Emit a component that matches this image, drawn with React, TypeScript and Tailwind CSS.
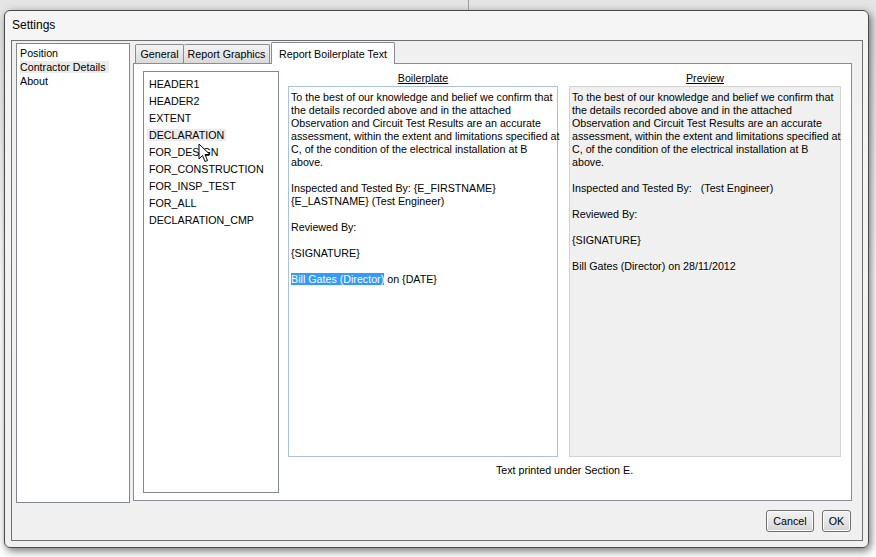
import React from "react";

const font = { fontFamily: '"Liberation Sans", Arial, sans-serif' };

const navItems = ["Position", "Contractor Details", "About"];
const sections = [
  "HEADER1",
  "HEADER2",
  "EXTENT",
  "DECLARATION",
  "FOR_DESIGN",
  "FOR_CONSTRUCTION",
  "FOR_INSP_TEST",
  "FOR_ALL",
  "DECLARATION_CMP",
];

const intro = [
  "To the best of our knowledge and belief we confirm that",
  "the details recorded above and in the attached",
  "Observation and Circuit Test Results are an accurate",
  "assessment, within the extent and limitations specified at",
  "C, of the condition of the electrical installation at B",
  "above.",
];

function Cursor() {
  return (
    <svg width="13" height="20" viewBox="0 0 13 20" className="absolute left-[198px] top-[143px] z-20">
      <path d="M1 1 L1 16 L4.5 12.5 L7 18.5 L9.5 17.5 L7 11.5 L12 11.5 Z" fill="#fff" stroke="#000" strokeWidth="1" strokeLinejoin="round" />
    </svg>
  );
}

function Button({ label, w }: { label: string; w: string }) {
  return (
    <button
      className={`${w} h-[22px] rounded-[3px] border border-[#707070] bg-gradient-to-b from-[#f2f2f2] via-[#e6e6e6] to-[#d4d4d4] text-[10.7px] text-black shadow-[inset_0_0_0_1px_#fcfcfc]`}
    >
      {label}
    </button>
  );
}

export default function App() {
  return (
    <div className="relative w-[876px] h-[557px] bg-gradient-to-b from-[#e4e4e4] via-white to-white overflow-hidden text-black" style={font}>
      <div className="absolute left-[468px] top-0 w-px h-[10px] bg-[#9a9a9a]" />
      <Cursor />
      <div className="ml-[4px] mt-[10px] w-[865px] h-[538px] rounded-[6px] border border-[#4a4a4a] bg-gradient-to-b from-[#f5f5f5] to-[#f0f0f0] shadow-[2px_3px_8px_rgba(0,0,0,0.55)] flex flex-col px-[6px]">
        <div className="h-[29px] flex items-center pl-[1px] pb-[1px] text-[12px]">Settings</div>
        <div className="w-[852px] h-[501px] border border-[#6f6f6f] bg-[#f0f0f0] flex flex-col pl-[4px] pt-[2px]">
          <div className="flex gap-[3px]">
            <div className="w-[114px] h-[460px] border border-[#828790] bg-white pt-[2px] pl-[3px] text-[10.7px]">
              {navItems.map((n) => (
                <div key={n} className="h-[14px] leading-[14px]">
                  <span className={n === "Contractor Details" ? "bg-[#ebebeb] pr-[3px]" : ""}>{n}</span>
                </div>
              ))}
            </div>
            <div className="w-[719px] flex flex-col">
              <div className="h-[20px] flex items-end pl-[2px] text-[10.7px]">
                <div className="h-[19px] w-[49px] justify-center border border-b-0 border-[#898c95] bg-gradient-to-b from-[#f3f3f3] to-[#dadada] flex items-center rounded-t-[2px]">
                  General
                </div>
                <div className="h-[19px] w-[86px] justify-center border border-l-0 border-b-0 border-[#898c95] bg-gradient-to-b from-[#f3f3f3] to-[#dadada] flex items-center rounded-t-[2px]">
                  Report Graphics
                </div>
                <div className="relative z-10 ml-[1px] -mb-px h-[22px] w-[124px] justify-center border border-b-0 border-[#898c95] bg-white flex items-start pt-[3px] rounded-t-[2px]">
                  Report Boilerplate Text
                </div>
              </div>
              <div className="h-[438px] border border-[#898c95] bg-white flex pl-[9px] pt-[7px] text-[10.7px]">
                <div className="w-[136px] h-[422px] border border-[#828790] pt-[4px] pl-[3px]">
                  {sections.map((s) => (
                    <div key={s} className="h-[17px] leading-[17px]">
                      <span className={s === "DECLARATION" ? "bg-[#ebebeb] px-[2px]" : "px-[2px]"}>{s}</span>
                    </div>
                  ))}
                </div>
                <div className="ml-[9px] flex flex-col">
                  <div className="flex gap-[11px]">
                    <div className="w-[270px] flex flex-col">
                      <div className="h-[15px] text-center underline leading-[13px] pt-[1px]">Boilerplate</div>
                      <div className="h-[371px] border border-[#abc1de] pl-[2px] pt-[4px] leading-[13px] whitespace-pre">
                        {intro.map((l) => (
                          <div key={l}>{l}</div>
                        ))}
                        <div>&nbsp;</div>
                        <div>Inspected and Tested By: {"{E_FIRSTNAME}"}</div>
                        <div>{"{E_LASTNAME}"} (Test Engineer)</div>
                        <div>&nbsp;</div>
                        <div>Reviewed By:</div>
                        <div>&nbsp;</div>
                        <div>{"{SIGNATURE}"}</div>
                        <div>&nbsp;</div>
                        <div>
                          <span className="bg-[#3399ff] text-white">Bill Gates (Director)</span> on {"{DATE}"}
                        </div>
                      </div>
                    </div>
                    <div className="w-[272px] flex flex-col">
                      <div className="h-[15px] text-center underline leading-[13px] pt-[1px]">Preview</div>
                      <div className="h-[371px] border border-[#d2d2d2] bg-[#f0f0f0] pl-[2px] pt-[4px] leading-[13px] whitespace-pre">
                        {intro.map((l) => (
                          <div key={l}>{l}</div>
                        ))}
                        <div>&nbsp;</div>
                        <div>Inspected and Tested By:   (Test Engineer)</div>
                        <div>&nbsp;</div>
                        <div>Reviewed By:</div>
                        <div>&nbsp;</div>
                        <div>{"{SIGNATURE}"}</div>
                        <div>&nbsp;</div>
                        <div>Bill Gates (Director) on 28/11/2012</div>
                      </div>
                    </div>
                  </div>
                  <div className="mt-[7px] text-center leading-[13px]">Text printed under Section E.</div>
                </div>
              </div>
            </div>
          </div>
          <div className="mt-[7px] flex justify-end gap-[8px] pr-[11px]">
            <Button label="Cancel" w="w-[48px]" />
            <Button label="OK" w="w-[29px]" />
          </div>
        </div>
      </div>
    </div>
  );
}
